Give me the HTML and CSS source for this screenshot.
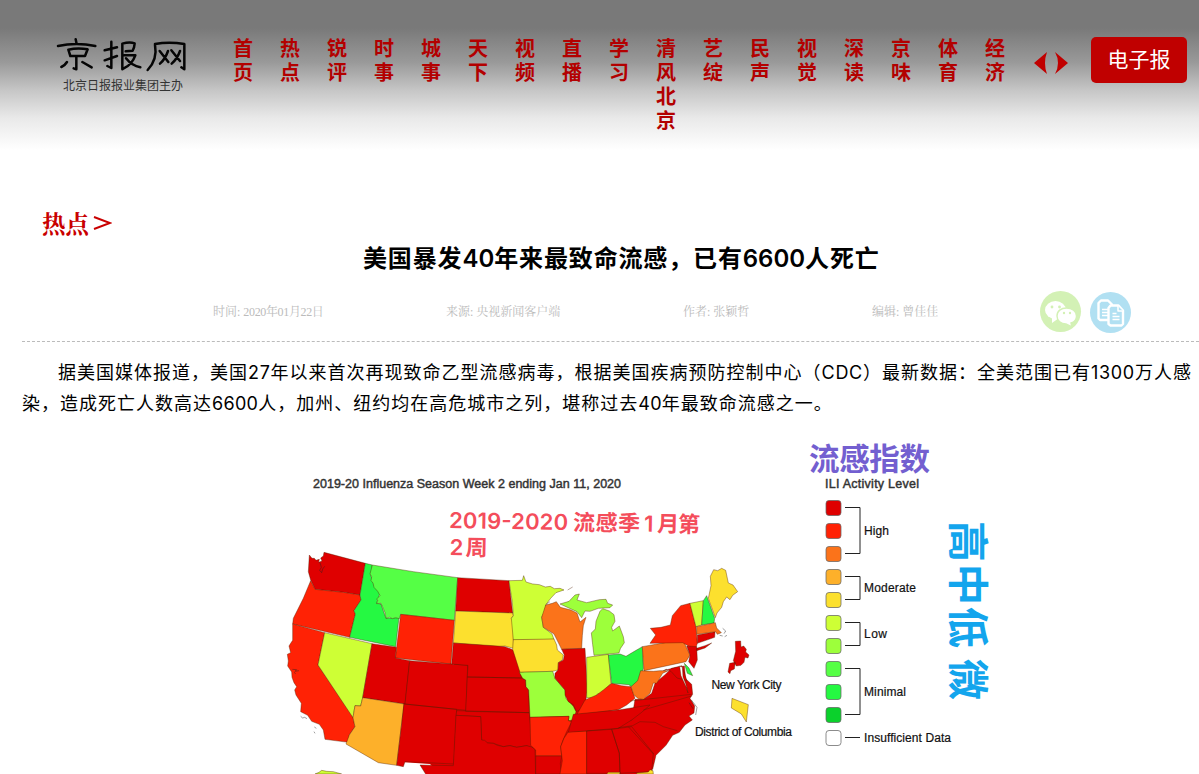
FILE: index.html
```html
<!DOCTYPE html>
<html lang="zh-CN">
<head>
<meta charset="utf-8">
<title>京报网</title>
<link rel="stylesheet" href="styles.css">
</head>
<body>
<header class="header">
  <a class="logo">
    <svg class="wordmark" width="134" height="40" viewBox="12 6 400 120" role="img" aria-label="京报网">
      <g fill="none" stroke="#050505" stroke-width="7.5" stroke-linejoin="round" stroke-linecap="round">
        <path d="M76 16l3 14M23 36Q78 24 135 36M54 47l6 19h44l8-20q-30-5-58 1M78 68v38l-8-3M50 84Q44 94 33 99M96 84l28 16"/>
        <path d="M163 49l37-9M183 23v79l-12-6M163 79l37-13M216 29v77M216 29q22-6 37-1-1 14-6 22l-21 2M222 64h33q-10 28-36 40M227 73q18 23 43 27"/>
        <path d="M314 32Q322 76 292 108M314 30q42-8 88 0v76l-9-6M328 51l26 33M353 51q-8 24-24 38M363 49l26 32M389 51q-8 23-25 38"/>
      </g>
    </svg>
    <span class="tagline">北京日报报业集团主办</span>
  </a>
  <nav class="nav">
    <a>首页</a><a>热点</a><a>锐评</a><a>时事</a><a>城事</a><a>天下</a><a>视频</a><a>直播</a><a>学习</a><a>清风北京</a><a>艺绽</a><a>民声</a><a>视觉</a><a>深读</a><a>京味</a><a>体育</a><a>经济</a>
  </nav>
  <svg class="arrows" width="34" height="22" viewBox="0 0 34 22"><path d="M0 11L13 0q-4 11 0 22zM34 11L21 0q6 11 0 22z" fill="#c00000"/></svg>
  <a class="epaper">电子报</a>
</header>
<main class="main">
  <div class="category">热点<svg width="19" height="16" viewBox="0 0 19 16"><path d="M1 2l16 6-16 6" fill="none" stroke="#c90000" stroke-width="1.9"/></svg></div>
  <h1 class="title">美国暴发<span>40</span>年来最致命流感，已有<span>6600</span>人死亡</h1>
  <div class="meta">
    <span class="date">时间: <span class="digits">2020年01月22日</span></span><span class="source">来源: 央视新闻客户端</span><span class="author">作者: 张颖哲</span><span class="editor">编辑: 曾佳佳</span>
    <svg class="share" width="91" height="42" viewBox="0 0 91 42">
      <circle cx="20.5" cy="20.5" r="20.5" fill="#d3f1b5"/>
      <g fill="#fff"><ellipse cx="15.500" cy="19" rx="10.500" ry="9"/><path d="M12 26v6l7-5z"/></g>
      <g fill="#d3f1b5"><circle cx="12" cy="16" r="1.4"/><circle cx="19.500" cy="16" r="1.4"/></g>
      <path d="M31 32l1 4-6-3c-5 0-9-3-9-8s4-8 9.500-8 10 3 10 8c0 3-2 6-5.500 7z" fill="#fff" stroke="#d3f1b5" stroke-width="1.4"/>
      <g fill="#d3f1b5"><circle cx="24" cy="22" r="1.2"/><circle cx="30" cy="22" r="1.2"/></g>
      <circle cx="70.5" cy="21.5" r="20.5" fill="#b1e0f2"/>
      <g fill="#b1e0f2" stroke="#fff" stroke-width="2.4" stroke-linejoin="round"><path d="M61 9.500h7l4 4V29H60l-1.500-1.500V12z"/><path d="M62 18.500h8m-8 3h8m-8 3h8" stroke-width="1.5"/><path d="M70.500 14.500h8l4.500 5V33l-1.500 1.500h-11L68.500 33V17z"/><path d="M78 15v5h5M72.500 22.500h4m-4 3h7m-7 3h7" stroke-width="1.5"/></g>
    </svg>
  </div>
  <p class="body">据美国媒体报道，美国<span>27</span>年以来首次再现致命乙型流感病毒，根据美国疾病预防控制中心（<span>CDC</span>）最新数据：全美范围已有<span>1300</span>万人感<br>染，造成死亡人数高达<span class="tight">6600</span>人，加州、纽约均在高危城市之列，堪称过去<span class="tight">40</span>年最致命流感之一。</p>
  <figure class="figure">
  <svg class="map" width="730" height="342" viewBox="280 432 730 342">
    <path d="M404 662l50 3 5-18 54 4 20 40 80 20 55-5-20 68H440l-10-10-29-2z" fill="#df0000"/>
    <g class="states" transform="translate(280 540) scale(.33333)">
      <path class="h1" d="M88 45l8 10 7 0 5 6 10-3-2 9 10-4-4-9 8-6 2-11 124 33-16 95-50-8-85-9-13-28-7-25z"/>
      <path class="h2" d="M92 122l13 26 85 9 50 8 3 15-21 32 4 10-17 70-171-40 2-17 30-60z"/>
      <path class="m3" d="M256 70l21 5-5 30 10 30 18 25-10 30 13 2 15 43 39-2-10 87-138-28 17-70-4-10 21-32-3-15z"/>
      <path class="m4" d="M277 75l123 20 133 18-10 128-161-18-4 13-11-3-10 3-8-4-11 3-3-17-12-28-13 1 3-10-3-4 10-10-7-13-11-12-3-13-6-7 2-12-5-8z"/>
      <path class="h2" d="M362 223l161 18-10 131-167-18z"/>
      <path class="h2" d="M38 252l96 26-20 97 105 155 6 30-17 25-3 22-70-9-5-28-12-17-23-9-12-18-21-11 2-25-16-25-4-15 6-10-8-12-6-16-1-16-12-18 2-15-3-20 10-5-5-20 5-8 6-9z"/>
      <path class="l1" d="M134 278l142 33-28 162-6 25-17-1-6 36-105-158z"/>
      <path class="h1" d="M276 311l73 11-3 32 43 8-14 130-127-19z"/>
      <path class="m1" d="M248 473l124 19-22 184-55-8-97-56 10-27 17-25-6-27 6-36 17 1z"/>
      <path class="h1" d="M389 362l174 14-5 135-183-19zM372 492l158 16-8 164-147-7-5 15-20-4z"/>
      <path class="l1" d="M105 702l12-5 8-6 15 3 20 1 25 7z"/>
      <path class="spots" d="M62 529l6 5 6-2 7 4M103 561l6 4M102 575l3 5M120 67l4 15-5 9 6 7 3-11 6-8M37 388l13 1-5 5 12-2M42 397l5 4"/>
    </g>
    <g class="states" transform="translate(440 540) scale(.33333)">
      <path class="h1" d="M53 113l154 9 5 45 6 52-171-6z"/>
      <path class="m2" d="M47 213l171 6 2 8-6 8 6 8v82l-25-7-22 2-133-11z"/>
      <path class="h1" d="M40 309l133 9 22 2 25 10 16 40 8 44-162-3 2-35-49-4zM82 411l162 3 13 6 1 20 8 10 2 68-191-4zM50 512l218 6 4 42 8 65-20-8-30 5-20-5-20 3-30-10-17-1-18-9-3-70-74-4z"/>
      <path class="h1" d="M48 526l74 4 3 70 9 1 9 8 17 1 12 6 18 4 20-3 20 5 30-5 15 4 10 6 2 80H-40l-20-32 100 2z"/>
      <path class="l1" d="M207 122l40-1 4-14 7 19 20 6 20 2 18 7 15-2 12 7 17-1 12 5-24 8-16 17-15 20-2 20-10 16 5 31 26 20 6 16-122 2-6-65 6-8-3-40z"/>
      <path class="h3" d="M317 195l20-5 12-5 12 17 32 8 18 9 9 27 18-14-8 25-3 30-2 38-60 3-23-46-32-20-5-30z"/>
      <path class="l2" d="M360 192l27-8 18-19 13-3-7 18 29 8 38-9 20-1 5 12 15 5-8 8-35 2-25 9-15-1-10 20-14-18z"/>
      <path class="m2" d="M220 299l122-2 8 18 2 15 18 15-3 15-12 8-1 22-16 4-98 3-22-69z"/>
      <path class="l2" d="M238 397l100-3 7 21 30 35 3 25 22 24 8 16-8 25-15 2 2-13-117 3-4-82-8-10-1-20-9-5z"/>
      <path class="h1" d="M365 328l70-3 7 125-7 50-25 15-10-21-15-9-10-20v-15l-30-35v-15l9-10 1-22 15-8 3-15z"/>
      <path class="l1" d="M440 352l65-9 8 87-13 14-10 16-18 2-6 12-26-1z"/>
      <path class="h2" d="M270 532l117-3-2 13 10 3-15 30-11 25-7 20 3 28h-78v-18l-15-14z"/>
      <path class="h1" d="M287 648h78l-4 22 3 32h-77z"/>
      <path class="h2" d="M385 575l55-2v129h-80l7-40-5-42 10-25z"/>
      <path class="l2" d="M383 150l15-9M318 193l12-8"/>
    </g>
    <g class="states" transform="translate(580 540) scale(.33333)">
      <path class="l2" d="M60 214l8-8 20 7 14 11 3 20-10 18 3 11 20-15 12 32 3 18-12 18-4 13-75 7-4-32-4-35 12-12 2-23z"/>
      <path class="h1" d="M155 540l10-62 25 0 25-18 10-30 30-26 20-19 38-7 4 38 18 17 3 30-8 12 14 23-2 21-15 9 10 12-22 15-17 22-20 9-20 30-30 30-10 42-195 10V573z"/>
      <path class="h2" d="M-10 525L15 480l35-15 20-15 25-20 30 7 28 3 12 35-25 20-25 14z"/>
      <path class="h1" d="M-20 523l135-13 95-15-25 22-30 23-40 25-150 12zM20 573l75-5 23 72 2 60H20zM95 568l60-8 65 80-5 55-95 5-2-60z"/>
      <path class="line" d="M150 483l185-20M115 563l43-6 22-12 45 2 25 13 42 12M145 560l75 82M190 510l145-42"/>
      <path class="m3" d="M85 345l35-3 18 7 20-12 29-17 3 65-8 30-10 10-5 12-12 3-9-6-51-4z"/>
      <path class="h1" d="M250 392l55-15 16 45-30-8-18-20-14-6z"/>
      <path class="h3" d="M187 320l123-22 7 20 13 27-12 20-126 27zM153 440l20-18 9-30 38 2 20-2 25 0-17 8-18 30-10-1-10 31-20 18-15-2-14-12z"/>
      <path class="h2" d="M210 310l17-25-16-20 32-3 28-7 6-28 25-30 28-7 18 70 4 50-6 20-38-22z"/>
      <path class="h1" d="M320 318l30 2 2 40-10 25-16-20 4-20zM352 285l53-10-1 17-52 18zM350 325l25-8 20-8-20 15-25 8z"/>
      <path class="l1" d="M330 190l40-8-5 73-17 5z"/><path class="m3" d="M370 182l10-15 24 68-2 14-37 6zM313 370l14 14 11 23-16-7z"/>
      <path class="m2" d="M385 175l8-38-2-28 10-20 12 3 12-7 12 6 8 38 14 6 14 20-15 11-8 13-10-8-10 14-5 17-14 17-5 14z"/>
      <path class="h3" d="M350 260l56-12 4 16 14 14-12 5-5-8-57 8z"/>
      <path d="M299 379l4 28 16 35 5 17-7-28-8-20-2-30z" fill="#fff" stroke="none"/>
      <path class="spots" d="M419 286l9 2M428 265l9 8-5 8M434 290l7-4M334 480l17 22-4 23M327 488l12 18"/>
      <path class="h1" d="M466 304l16-1 1 18 8-3 8 10-2 8 10 9-3 9-9-2-3 15-9 9-14 2-9-16 7-28zM449 370l17-3-3 20-11 5-2 9-6-5z"/>
      <path class="m2" d="M456 475l49 19-6 52-15-24-30-18z"/>
      <path class="m2" d="M85 697h35l-1 5H80zM170 699l35-3 5-7 9 3 1 10h-50z"/>
    </g>
    <g class="label">
      <text class="bold" x="313" y="488" textLength="308">2019-20 Influenza Season Week 2 ending Jan 11, 2020</text>
      <text class="bold" x="825" y="488" textLength="94">ILI Activity Level</text>
      <text x="711.5" y="689" textLength="70">New York City</text>
      <text x="695" y="736" textLength="97">District of Columbia</text>
      <text x="864" y="535" textLength="25">High</text>
      <text x="864" y="592" textLength="52">Moderate</text>
      <text x="864" y="638" textLength="23">Low</text>
      <text x="864" y="696" textLength="42">Minimal</text>
      <text x="864" y="742" textLength="87">Insufficient Data</text>
    </g>
    <g class="swatches">
      <rect class="h1" x="826" y="500.5" width="15" height="15" rx="3"/><rect class="h2" x="826" y="523.5" width="15" height="15" rx="3"/><rect class="h3" x="826" y="546.5" width="15" height="15" rx="3"/><rect class="m1" x="826" y="569.5" width="15" height="15" rx="3"/><rect class="m2" x="826" y="592.5" width="15" height="15" rx="3"/><rect class="l1" x="826" y="615.5" width="15" height="15" rx="3"/><rect class="l2" x="826" y="638.5" width="15" height="15" rx="3"/><rect class="m4" x="826" y="661.5" width="15" height="15" rx="3"/><rect class="m3" x="826" y="684.5" width="15" height="15" rx="3"/><rect class="m5" x="826" y="707.5" width="15" height="15" rx="3"/><rect x="826" y="730.5" width="15" height="15" rx="3" fill="#fff"/>
    </g>
    <path d="M845 507.500h15v46h-15M845 576.500h15v23h-15M845 622.500h15v23h-15M845 668.500h15v46h-15M845 737.500h15" fill="none" stroke="#222"/>
    <g class="notes">
      <text class="purple" x="809" y="470" textLength="121">流感指数</text>
      <g class="pink" transform="rotate(1 450 528)"><text x="449" y="528" textLength="119">2019-2020</text><text x="573" y="528" textLength="67">流感季</text><text x="644" y="528">1</text><text x="657" y="528" textLength="43">月第</text><text x="450" y="555">2</text><text x="466" y="555">周</text></g>
      <g class="blue"><text transform="translate(953 521) rotate(90)">高</text><text transform="translate(953 564) rotate(90)">中</text><text transform="translate(953 607) rotate(90)">低</text><text transform="translate(953 659) rotate(90)">微</text></g>
    </g>
  </svg>
  </figure>
</main>
</body>
</html>
```
FILE: styles.css
```css
* { box-sizing: border-box; }
body {
  margin: 0;
  width: 1199px;
  height: 774px;
  overflow: hidden;
  background: #fff;
  font-family: Inter, "Noto Sans CJK SC", sans-serif;
}
.header {
  display: flex;
  align-items: flex-start;
  height: 150px;
  padding: 37px 12px 0 54px;
  background: linear-gradient(#797979 0, #797979 28px, #999 62px, #c7c7c7 91px, #e9e9e9 118px, #fff 150px);
}
.logo { width: 179px; display: flex; flex-direction: column; }
.wordmark { display: block; margin-top: -1px; }
.tagline { margin: 0 0 0 9px; font-size: 12px; line-height: 19px; color: #333; white-space: nowrap; font-weight: 400; }
.nav { display: flex; gap: 27px; width: 801px; }
.nav a { flex: 0 0 20px; width: 20px; font-size: 20px; line-height: 24px; font-weight: 700; color: #b30000; word-break: break-all; }
.arrows { margin-top: 15px; flex: none; }
.epaper { margin-left: 23px; width: 96px; height: 46px; border-radius: 5px; background: #c00000; color: #fff; font-size: 21px; line-height: 45px; text-align: center; }
.main { padding-left: 22px; }
.category { display: flex; align-items: center; gap: 4px; padding: 53px 0 0 20px; height: 92px; font: 700 23.5px/36px "Noto Serif CJK SC", "Noto Sans CJK SC", serif; color: #c90000; }
.title { margin: 0; height: 34px; padding-left: 341px; font-size: 24px; line-height: 34px; font-weight: 700; letter-spacing: .85px; white-space: nowrap; }
.title span { font-weight: 600; letter-spacing: 0; }
.meta { display: flex; align-items: center; height: 66px; padding: 7px 0 0 191px; border-bottom: 1px dashed #bbb; font: 12px/18px "Liberation Serif", "Noto Serif CJK SC", "Noto Sans CJK SC", serif; color: #bbb; white-space: nowrap; }
.digits { letter-spacing: -.35px; }
.date { width: 233px; }
.source { width: 237px; }
.author { width: 189px; }
.editor { width: 168px; }
.share { flex: none; }
.body { margin: 15px 0 0; height: 62px; font-size: 18px; line-height: 31px; letter-spacing: 1px; text-indent: 36px; white-space: nowrap; color: #000; }
.body span { letter-spacing: .7px; }
.body .tight { letter-spacing: .3px; }
.figure { margin: 13px 0 0 258px; }
.map { display: block; }
.states path { stroke: #502000; stroke-opacity: .65; stroke-width: 1.8; stroke-linejoin: round; }
.states .line, .states .spots { fill: none; }
.states .spots { stroke: #222; stroke-width: 2; }
.h1 { fill: #df0000; }
.h2 { fill: #ff2205; }
.h3 { fill: #fb731a; }
.m1 { fill: #fdb02a; }
.m2 { fill: #fce02e; }
.l1 { fill: #ceff35; }
.l2 { fill: #9dff3b; }
.m3 { fill: #25f942; }
.m4 { fill: #55ff45; }
.m5 { fill: #0bd12c; }
.swatches rect { stroke: #666; stroke-opacity: .75; }
.label text { font-family: "Liberation Sans", sans-serif; font-size: 12px; fill: #111; stroke: #111; stroke-width: .2; }
.label .bold { font-size: 12.5px; fill: #333; stroke: #333; stroke-width: .45; }
.notes { font-family: Inter, "Noto Sans CJK SC", sans-serif; font-weight: 500; }
.purple { font-size: 30.5px; fill: #735fd0; font-weight: 700; }
.pink text { font-size: 22px; fill: #f44d5b; font-weight: 600; }
.blue text { font-size: 41px; fill: #13a5ed; font-weight: 700; }
```
